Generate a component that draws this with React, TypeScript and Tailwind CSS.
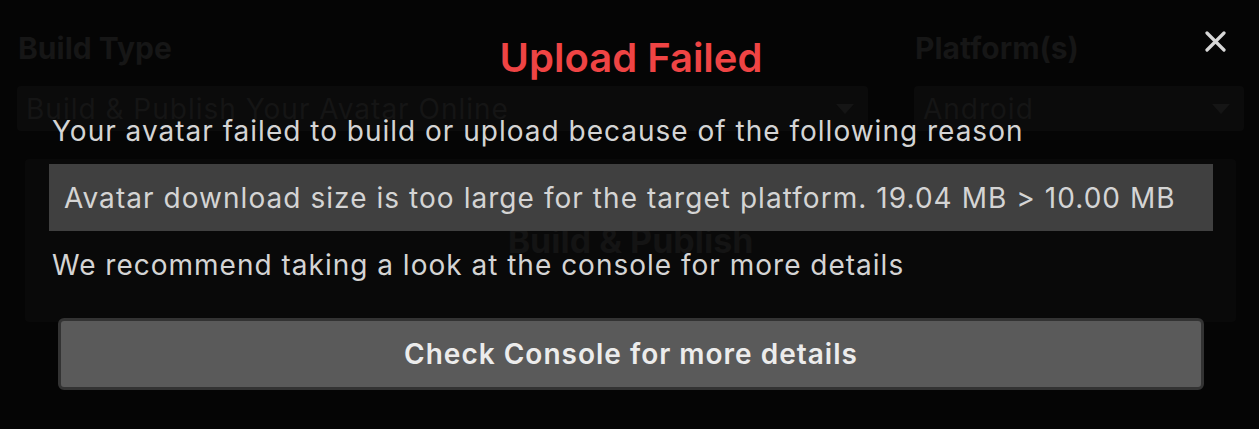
const font = { fontFamily: "Inter, 'Noto Sans', sans-serif" };

function CloseIcon() {
  return (
    <svg className="absolute right-[33px] top-[31px] h-[21px] w-[21px]" viewBox="0 0 21 21" fill="none">
      <path d="M2 2L19 19M19 2L2 19" stroke="#d8d8d8" strokeWidth="3.2" strokeLinecap="round" />
    </svg>
  );
}

function Background() {
  return (
    <div className="flex flex-col">
      <div className="flex gap-[46px] pl-[17px] pr-[15px] pt-[28px]">
        <div className="w-[851px]">
          <div className="h-[40px] pl-[1px] text-[30px] font-bold leading-[40px] text-[#161616]">Build Type</div>
          <div className="mt-[18px] flex h-[45px] items-center justify-between rounded-[4px] bg-[#0b0b0b] pl-[9px] pr-[14px]">
            <span className="text-[28px] leading-[36px] tracking-[1px] text-[#151515]">Build &amp; Publish Your Avatar Online</span>
            <span className="h-0 w-0 border-x-[9px] border-t-[10px] border-x-transparent border-t-[#151515]" />
          </div>
        </div>
        <div className="flex-1">
          <div className="h-[40px] pl-[1px] text-[30px] font-bold leading-[40px] text-[#161616]">Platform(s)</div>
          <div className="mt-[18px] flex h-[45px] items-center justify-between rounded-[4px] bg-[#0b0b0b] pl-[9px] pr-[14px]">
            <span className="text-[28px] leading-[36px] tracking-[1px] text-[#151515]">Android</span>
            <span className="h-0 w-0 border-x-[9px] border-t-[10px] border-x-transparent border-t-[#151515]" />
          </div>
        </div>
      </div>
      <div className="ml-[25px] mr-[23px] mt-[28px] flex h-[163px] items-center justify-center rounded-[4px] bg-[#090909]">
        <span className="text-[34px] font-bold leading-[40px] text-[#141414]">Build &amp; Publish</span>
      </div>
    </div>
  );
}

function ErrorModal() {
  return (
    <div className="absolute inset-0 flex flex-col pl-[49px] pr-[46px]">
      <div className="pt-[35px] text-center text-[40px] font-semibold leading-[46px] text-[#ef4444]">Upload Failed</div>
      <div className="mt-[34px] pl-[3px] text-[28px] leading-[32px] tracking-[1px] text-[#d4d4d4]">
        Your avatar failed to build or upload because of the following reason
      </div>
      <div className="mt-[17px] flex h-[67px] items-center bg-[#404040] px-[15px] text-[28px] leading-[32px] tracking-[1.05px] text-[#d4d4d4]">
        Avatar download size is too large for the target platform. 19.04 MB &gt; 10.00 MB
      </div>
      <div className="mt-[18px] pl-[3px] text-[28px] leading-[32px] tracking-[1px] text-[#d4d4d4]">
        We recommend taking a look at the console for more details
      </div>
      <button className="mx-[9px] mt-[37px] flex h-[72px] items-center justify-center rounded-[6px] border-[3px] border-[#333333] bg-[#5a5a5a] text-[28px] font-semibold tracking-[1px] text-[#ececec]">
        Check Console for more details
      </button>
      <CloseIcon />
    </div>
  );
}

export default function App() {
  return (
    <div className="relative h-[429px] w-[1259px] overflow-hidden bg-[#050505]" style={font}>
      <Background />
      <ErrorModal />
    </div>
  );
}
